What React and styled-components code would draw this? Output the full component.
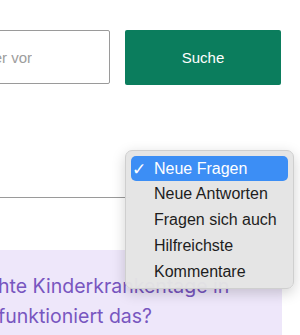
import styled, { createGlobalStyle } from "styled-components";

const GlobalStyle = createGlobalStyle`
  html, body {
    margin: 0;
    padding: 0;
    background: #ffffff;
    overflow: hidden;
  }
`;

const sortOptions = [
  "Neue Fragen",
  "Neue Antworten",
  "Fragen sich auch",
  "Hilfreichste",
  "Kommentare",
];

export default function App() {
  const selected = 0;

  return (
    <Page>
      <GlobalStyle />
      <SearchRow>
        <SearchInput placeholder="Gib deine Frage oder Stichwörter vor" />
        <SearchButton>Suche</SearchButton>
      </SearchRow>

      <SortArea>
        <Divider />
        <Menu>
          {sortOptions.map((option, i) => (
            <MenuItem key={option} active={i === selected}>
              <Check>{i === selected ? "✓" : ""}</Check>
              {option}
            </MenuItem>
          ))}
        </Menu>
      </SortArea>

      <QuestionCard>
        <QuestionTitle>
          <TitleLine>
            <Hidden offset={-2} gap={0}>Wie beantrage ich erhö</Hidden>
            hte Kinderkrankentage in
          </TitleLine>
          <TitleLine>
            <Hidden offset={-8} gap={6}>Corona-Zeiten und wie</Hidden>
            funktioniert das?
          </TitleLine>
        </QuestionTitle>
      </QuestionCard>
    </Page>
  );
}

const Page = styled.div`
  width: 300px;
  height: 335px;
  overflow: hidden;
  position: relative;
  font-family: "Liberation Sans", Arial, sans-serif;
`;

const SearchRow = styled.div`
  display: flex;
  align-items: stretch;
  gap: 15px;
  margin-top: 30px;
  margin-left: -300px;
  height: 55px;
`;

const SearchInput = styled.input`
  box-sizing: border-box;
  width: 410px;
  height: 54px;
  border: 1px solid #9a9a9a;
  border-radius: 2px;
  padding: 0 77px 0 0;
  font-family: "Liberation Sans", Arial, sans-serif;
  font-size: 15px;
  color: #333;
  text-align: right;
  outline: none;

  &::placeholder {
    color: #9d9d9d;
  }
`;

const SearchButton = styled.button`
  width: 156px;
  height: 55px;
  border: none;
  border-radius: 2px;
  background: #0b7d5d;
  color: #ffffff;
  font-family: "Liberation Sans", Arial, sans-serif;
  font-size: 15px;
  padding: 0;
`;

const SortArea = styled.div`
  position: relative;
  height: 165px;
`;

const Divider = styled.div`
  position: absolute;
  top: 112px;
  left: 0;
  width: 130px;
  height: 1px;
  background: #9a9a9a;
`;

const Menu = styled.div`
  position: absolute;
  top: 65px;
  left: 125px;
  z-index: 2;
  box-sizing: border-box;
  width: 169px;
  padding: 5px 5px 3px;
  background: rgba(228, 228, 228, 0.97);
  border: 1px solid #cfcfcf;
  border-radius: 7px;
  box-shadow: 0 4px 14px rgba(0, 0, 0, 0.18);
  display: flex;
  flex-direction: column;
`;

const MenuItem = styled.div`
  display: flex;
  align-items: center;
  height: ${(props) => (props.active ? "25px" : "26px")};
  border-radius: 5px;
  background: ${(props) => (props.active ? "#3c8ef5" : "transparent")};
  color: ${(props) => (props.active ? "#ffffff" : "#1d1d1d")};
  font-family: "Liberation Sans", Arial, sans-serif;
  font-size: 16px;
`;

const Check = styled.span`
  width: 22px;
  padding-left: 1px;
  text-align: left;
  font-size: 17px;
  font-family: "DejaVu Sans", sans-serif;
`;

const QuestionCard = styled.div`
  width: 282px;
  height: 100px;
  background: #eee7fa;
  overflow: hidden;
  position: relative;
`;

const QuestionTitle = styled.div`
  padding-top: 21px;
  font-family: Inter, "Noto Sans", sans-serif;
  font-size: 19.5px;
  line-height: 30px;
  color: #7856c0;
`;

const TitleLine = styled.div`
  display: flex;
  white-space: nowrap;
`;

const Hidden = styled.span`
  flex: none;
  width: 300px;
  margin-left: ${(props) => props.offset - 300}px;
  margin-right: ${(props) => props.gap}px;
  text-align: right;
  overflow: hidden;
`;
